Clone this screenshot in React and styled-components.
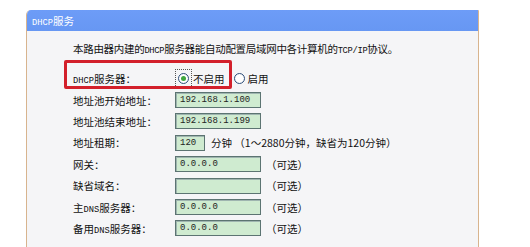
import React from 'react';
import styled, { createGlobalStyle } from 'styled-components';

const GlobalStyle = createGlobalStyle`
  html, body {
    margin: 0;
    padding: 0;
    background: #ffffff;
  }
  body {
    font-family: "Noto Sans CJK SC", "DejaVu Sans", sans-serif;
    font-size: 10.5px;
    color: #111111;
  }
`;

const Page = styled.div`
  padding: 10px 0 0 26px;
  width: 453px;
`;

const Panel = styled.div`
  background: #f5f5f7;
  border-left: 1px solid #d8b48e;
  border-right: 1px solid #d8b48e;
  border-top-left-radius: 5px;
  border-top-right-radius: 1px;
  min-height: 245px;
  overflow: hidden;
`;

const Header = styled.div`
  height: 21px;
  line-height: 21px;
  background: linear-gradient(#6d9cf7, #6797f3);
  color: #ffffff;
  padding-left: 5px;
  font-size: 10.5px;
`;

// half-width latin, like the bitmap font of the router page
const Lat = styled.span`
  font-family: "Liberation Mono", monospace;
  font-size: 8.75px;
`;

const Body = styled.div`
  position: relative;
  padding: 10px 0 0 46px;
`;

const Desc = styled.div`
  height: 16px;
  line-height: 16px;
  margin-bottom: 11px;
  letter-spacing: -0.3px;
  white-space: nowrap;
`;

const Form = styled.div`
  display: grid;
  grid-template-columns: 102px 1fr;
  grid-auto-rows: 21.4px;
  align-items: center;
`;

const Label = styled.div`
  white-space: nowrap;
`;

const Field = styled.div`
  display: flex;
  align-items: center;
  white-space: nowrap;
`;

const Input = styled.div`
  box-sizing: border-box;
  width: ${p => p.$w || 86}px;
  height: 16px;
  line-height: 14px;
  background: #cfebd0;
  border: 1px solid #5c7472;
  box-shadow: inset 1px 1px 0 #9fb5b0;
  padding-left: 4px;
  font-family: "Liberation Mono", monospace;
  font-size: 9px;
  color: #222;
  margin-right: ${p => p.$gap || 5}px;
`;

const Radio = styled.span`
  box-sizing: border-box;
  display: inline-flex;
  align-items: center;
  justify-content: center;
  width: 11px;
  height: 11px;
  border-radius: 50%;
  border: 1px solid #2f4f7a;
  background: radial-gradient(circle, #ffffff 55%, #dde3ea);
  &::after {
    content: "";
    display: ${p => (p.$checked ? 'block' : 'none')};
    width: 5px;
    height: 5px;
    border-radius: 50%;
    background: #3fa63f;
  }
`;

const Focus = styled.span`
  display: inline-flex;
  align-items: center;
  justify-content: center;
  width: 17px;
  height: 19px;
  border: 1px dotted #555;
  box-sizing: border-box;
`;

const Option = styled.span`
  display: inline-flex;
  align-items: center;
  gap: ${p => p.$gap || 2}px;
  margin-right: ${p => p.$mr || 0}px;
`;

const Highlight = styled.div`
  position: absolute;
  left: 37px;
  top: 29px;
  width: 168px;
  height: 29px;
  box-sizing: border-box;
  border: 3px solid #d3202b;
  border-radius: 2px;
`;

const Hint = styled.span``;

const rows = [
  { label: '地址池开始地址：', value: '192.168.1.100' },
  { label: '地址池结束地址：', value: '192.168.1.199' },
];

const optional = [
  { label: <>网关：</>, value: '0.0.0.0' },
  { label: <>缺省域名：</>, value: '' },
  { label: <>主<Lat>DNS</Lat>服务器：</>, value: '0.0.0.0' },
  { label: <>备用<Lat>DNS</Lat>服务器：</>, value: '0.0.0.0' },
];

export default function App() {
  return (
    <>
      <GlobalStyle />
      <Page>
        <Panel>
          <Header><Lat>DHCP</Lat>服务</Header>
          <Body>
            <Desc>
              本路由器内建的<Lat>DHCP</Lat>服务器能自动配置局域网中各计算机的<Lat>TCP/IP</Lat>协议。
            </Desc>
            <Form>
              <Label><Lat>DHCP</Lat>服务器：</Label>
              <Field>
                <Option $mr={9} $gap={1}>
                  <Focus><Radio $checked /></Focus>
                  不启用
                </Option>
                <Option $gap={3}>
                  <Radio />
                  启用
                </Option>
              </Field>
              {rows.map(r => (
                <React.Fragment key={r.label}>
                  <Label>{r.label}</Label>
                  <Field><Input>{r.value}</Input></Field>
                </React.Fragment>
              ))}
              <Label>地址租期：</Label>
              <Field>
                <Input $w={30} $gap={6}>120</Input>
                <Hint>分钟 （1～2880分钟，缺省为120分钟）</Hint>
              </Field>
              {optional.map((r, i) => (
                <React.Fragment key={i}>
                  <Label>{r.label}</Label>
                  <Field>
                    <Input>{r.value}</Input>
                    <Hint>（可选）</Hint>
                  </Field>
                </React.Fragment>
              ))}
            </Form>
            <Highlight />
          </Body>
        </Panel>
      </Page>
    </>
  );
}
